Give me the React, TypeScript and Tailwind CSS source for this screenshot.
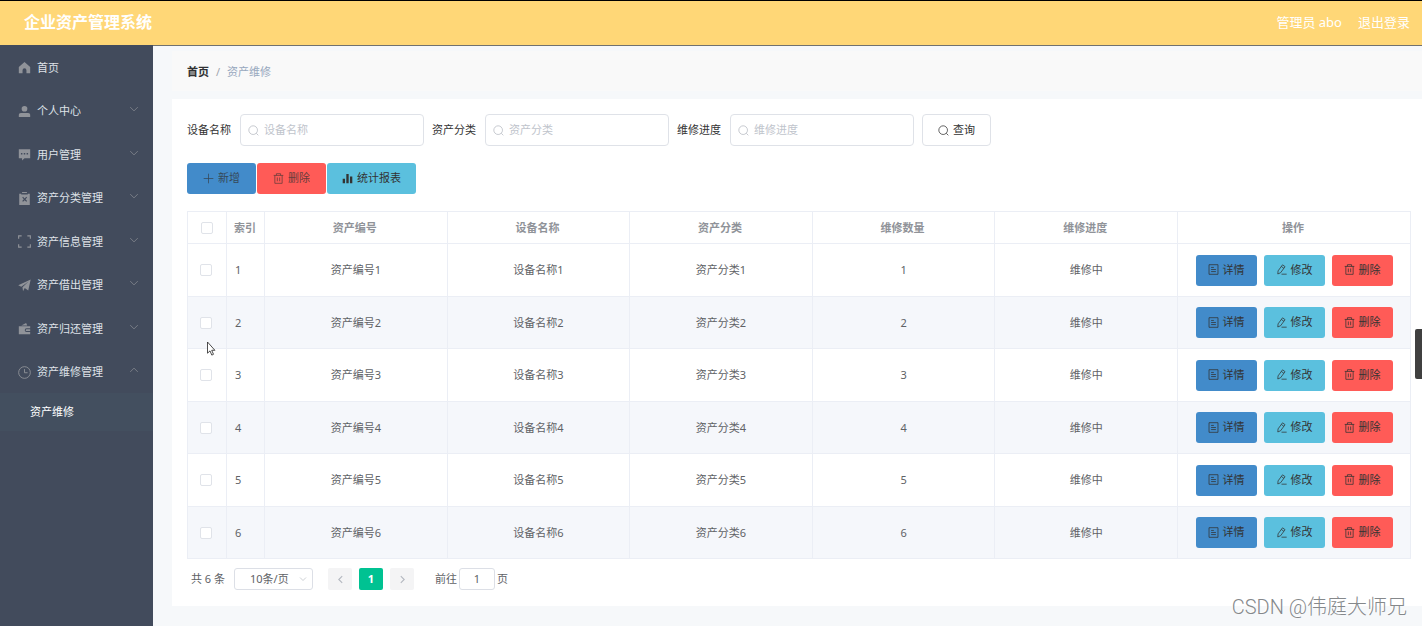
import type { ReactNode } from "react"
import clsx from "clsx"

type IconProps = { className?: string }

const Solid = ({ children, className }: { children: ReactNode; className?: string }) => (
  <svg viewBox="0 0 16 16" fill="currentColor" aria-hidden="true" className={clsx("shrink-0", className)}>
    {children}
  </svg>
)

const Line = ({ children, className }: { children: ReactNode; className?: string }) => (
  <svg
    viewBox="0 0 16 16"
    fill="none"
    stroke="currentColor"
    strokeWidth="1.1"
    aria-hidden="true"
    className={clsx("shrink-0", className)}
  >
    {children}
  </svg>
)

const HomeIcon = (p: IconProps) => (
  <Solid {...p}>
    <path d="M8 1.2 15 7.4V15h-4.6v-3.6a2.4 2.4 0 0 0-4.8 0V15H1V7.4z" />
  </Solid>
)
const UserIcon = (p: IconProps) => (
  <Solid {...p}>
    <circle cx="8" cy="4.6" r="3.5" />
    <path d="M1 14.8v-2.6c0-1.5 1-2.4 2.5-2.4h9c1.5 0 2.5.9 2.5 2.4v2.6z" />
  </Solid>
)
const CommentIcon = (p: IconProps) => (
  <Solid {...p}>
    <path
      fillRule="evenodd"
      d="M1 1.5h14v11H8l-3 2.800v-2.800H1zM3.600 6.300v1.600h1.800V6.300zm3.500 0v1.600h1.800V6.300zm3.500 0v1.600h1.800V6.300z"
    />
  </Solid>
)
const ReleaseIcon = (p: IconProps) => (
  <Solid {...p}>
    <path d="M5 0h6v1.300H5z" />
    <path
      fillRule="evenodd"
      d="M1.500 2H4v1.200h8V2h2.500v14h-13zM5.200 6.900 7.200 9l-2 2.100 1 1L8.200 10l2 2.100 1-1L9.200 9l2-2.100-1-1L8.200 8l-2-2.100z"
    />
  </Solid>
)
const FullScreenIcon = (p: IconProps) => (
  <Line {...p}>
    <path strokeWidth="1.4" d="M.8 4.500V1h3.700M11.500 1h3.700v3.500M15.200 11.500V15h-3.700M4.500 15H.8v-3.500" />
  </Line>
)
const PromotionIcon = (p: IconProps) => (
  <Solid {...p}>
    <path d="M15.600.6 12.600 14 8.300 11.200 6.200 15.200 5.500 10.200 13 3.200 4 9.400.3 7.600z" />
  </Solid>
)
const WalletIcon = (p: IconProps) => (
  <Solid {...p}>
    <path d="m4 4.200 6-3 1.400 3z" />
    <path fillRule="evenodd" d="M1 5.200h14v2.600h-4.500a2 2 0 0 0 0 4.400H15V15H1zm9.700 3.600H15v2.400h-4.300a1.200 1.200 0 0 1 0-2.400z" />
  </Solid>
)
const TimeIcon = (p: IconProps) => (
  <Line {...p}>
    <circle cx="8" cy="8" r="7.200" />
    <path d="M8 3.800V8.300h3.800" />
  </Line>
)
const ChevronIcon = (p: IconProps) => (
  <Line {...p}>
    <path d="m2 5 6 6 6-6" />
  </Line>
)
const SearchIcon = (p: IconProps) => (
  <Line {...p}>
    <circle cx="7.500" cy="7.500" r="6.300" />
    <path d="m12 12 3 3" />
  </Line>
)
const PlusIcon = (p: IconProps) => (
  <Line {...p}>
    <path d="M8 1v14M1 8h14" />
  </Line>
)
const TrashIcon = (p: IconProps) => (
  <Line {...p}>
    <path d="M1 3.500h14M5 3.500V1h6v2.500M2.700 3.500V15h10.600V3.500M6.300 6.500v5.500M9.700 6.500v5.500" />
  </Line>
)
const StatsIcon = (p: IconProps) => (
  <Solid {...p}>
    <path d="M1 8.500h3.400V15H1zM6.300 1.500h3.400V15H6.300zM11.600 5h3.400v10h-3.400z" />
  </Solid>
)
const TicketsIcon = (p: IconProps) => (
  <Line {...p}>
    <path d="M1.500 1h13v14h-13zM4.500 5h4M4.500 8h7M4.500 11h7" />
  </Line>
)
const EditIcon = (p: IconProps) => (
  <Line {...p}>
    <path d="m3 10 6.500-8.800 3.700 2.700L6.700 12.700 2.600 14.500zM7.800 3.600l3.700 2.700M8 14.800h7.500" />
  </Line>
)

const menu = [
  { label: "首页", icon: HomeIcon },
  { label: "个人中心", icon: UserIcon, children: true },
  { label: "用户管理", icon: CommentIcon, children: true },
  { label: "资产分类管理", icon: ReleaseIcon, children: true },
  { label: "资产信息管理", icon: FullScreenIcon, children: true },
  { label: "资产借出管理", icon: PromotionIcon, children: true },
  { label: "资产归还管理", icon: WalletIcon, children: true },
  { label: "资产维修管理", icon: TimeIcon, children: true, open: true },
]

const filters = [
  { id: "name", label: "设备名称" },
  { id: "category", label: "资产分类" },
  { id: "progress", label: "维修进度" },
]

const columns = ["资产编号", "设备名称", "资产分类", "维修数量", "维修进度"]

const rows = [1, 2, 3, 4, 5, 6].map((n) => ({
  id: n,
  cells: [`资产编号${n}`, `设备名称${n}`, `资产分类${n}`, `${n}`, "维修中"],
}))

const cell = "border-r border-b border-[#ebeef5]"

function Checkbox({ label }: { label: string }) {
  return (
    <input
      type="checkbox"
      aria-label={label}
      className="block size-3 mx-auto appearance-none rounded-xs border border-[#e0e3e9] bg-white checked:bg-[#00c292]"
    />
  )
}

function Header() {
  return (
    <header className="h-[45px] pl-6 pr-3 pb-[3px] flex items-center justify-between border-t border-black bg-[#ffd777] text-white">
      <h1 className="text-base font-bold">企业资产管理系统</h1>
      <div className="flex items-center gap-4 text-[13px]">
        <span>管理员 abo</span>
        <a href="#logout">退出登录</a>
      </div>
    </header>
  )
}

function Sidebar() {
  return (
    <nav className="w-[153px] shrink-0 bg-[#424b5c] text-[#dfe2e8]">
      <ul className="grid auto-rows-fr h-[348px]">
        {menu.map(({ label, icon: Icon, children, open }) => (
          <li key={label}>
            <a href="#menu" className="h-full pt-0.5 pl-[18px] pr-3 flex items-center">
              <Icon className="size-[13px] mr-1.5 text-[#909399]" />
              <span className="flex-1">{label}</span>
              {children && (
                <ChevronIcon className={clsx("size-2.5 mb-1 mr-0.5 text-[#909399]", open && "rotate-180")} />
              )}
            </a>
          </li>
        ))}
      </ul>
      <a href="#repair" className="h-[38px] pl-[30px] flex items-center bg-[#434f5f] text-white">
        资产维修
      </a>
    </nav>
  )
}

function SearchForm() {
  return (
    <form className="flex flex-wrap items-center gap-2" onSubmit={(e) => e.preventDefault()}>
      {filters.map(({ id, label }) => (
        <div key={id} className="flex items-center gap-[9px]">
          <label htmlFor={id} className="text-[#333]">
            {label}
          </label>
          <div className="relative">
            <SearchIcon className="absolute left-2 top-[11px] size-[11px] text-[#b4b8c0]" />
            <input
              id={id}
              placeholder={label}
              className="w-[184px] h-8 pl-[23px] pr-2 pb-0.5 rounded border border-[#dfe2e8] bg-white placeholder:text-[#c0c4cc] outline-none"
            />
          </div>
        </div>
      ))}
      <button className="w-[69px] h-8 flex items-center justify-center gap-1 rounded border border-[#dfe2e8] text-[#333]">
        <SearchIcon className="size-[11px]" />
        查询
      </button>
    </form>
  )
}

function Toolbar() {
  return (
    <div className="mt-[17px] flex gap-px text-[#333]">
      <button className="h-[31px] px-4 pb-px flex items-center gap-1 rounded-[3px] bg-[#428bca]">
        <PlusIcon className="size-[11px] opacity-75" />
        <span className="opacity-75">新增</span>
      </button>
      <button className="h-[31px] px-4 pb-px flex items-center gap-1 rounded-[3px] bg-[#ff5b57]">
        <TrashIcon className="size-[11px] opacity-75" />
        <span className="opacity-75">删除</span>
      </button>
      <button className="h-[31px] px-[15px] pb-px flex items-center gap-1 rounded-[3px] bg-[#5bc0de]">
        <StatsIcon className="size-[11px]" />
        统计报表
      </button>
    </div>
  )
}

function RowActions() {
  const button = "h-[31px] px-3 pb-px flex items-center gap-1 rounded-[3px]"
  return (
    <div className="flex justify-center gap-[7px] text-[#333]">
      <button className={clsx(button, "bg-[#428bca]")}>
        <TicketsIcon className="size-[11px]" />
        详情
      </button>
      <button className={clsx(button, "bg-[#5bc0de]")}>
        <EditIcon className="size-[11px]" />
        修改
      </button>
      <button className={clsx(button, "bg-[#ff5b57]")}>
        <TrashIcon className="size-[11px]" />
        删除
      </button>
    </div>
  )
}

function RepairTable() {
  return (
    <table className="mt-[17px] w-full table-fixed border-separate border-spacing-0 border-t border-l border-[#ebeef5] text-center">
      <colgroup>
        <col className="w-[39px]" />
        <col className="w-[38px]" />
        {columns.map((name) => (
          <col key={name} />
        ))}
        <col className="w-[233px]" />
      </colgroup>
      <thead className="text-[#909399]">
        <tr className="h-8">
          <th className={cell}>
            <Checkbox label="全选" />
          </th>
          <th className={clsx(cell, "pl-[7px] text-left font-bold")}>索引</th>
          {columns.map((name) => (
            <th key={name} className={clsx(cell, "pr-0.5 font-bold")}>
              {name}
            </th>
          ))}
          <th className={clsx(cell, "pr-0.5 font-bold")}>操作</th>
        </tr>
      </thead>
      <tbody className="text-[#606266]">
        {rows.map((row) => (
          <tr key={row.id} className="h-[53px] even:h-[52px] even:bg-[#f5f7fb]">
            <td className={clsx(cell, "pr-0.5")}>
              <Checkbox label={`选择 ${row.id}`} />
            </td>
            <td className={clsx(cell, "pl-2 text-left")}>{row.id}</td>
            {row.cells.map((value, i) => (
              <td key={columns[i]} className={cell}>
                {value}
              </td>
            ))}
            <td className={cell}>
              <RowActions />
            </td>
          </tr>
        ))}
      </tbody>
    </table>
  )
}

function Pagination() {
  return (
    <div className="mt-[9px] pl-1 flex items-center text-[#606266]">
      <span className="mr-[9px]">共 6 条</span>
      <div className="relative mr-[15px]">
        <select
          aria-label="每页条数"
          className="block w-[79px] h-[22px] pl-[15px] appearance-none rounded-[3px] border border-[#dcdfe6] bg-white"
        >
          <option>10条/页</option>
        </select>
        <ChevronIcon className="absolute right-1.5 top-[7px] size-2 text-[#a4a8b0] pointer-events-none" />
      </div>
      <div className="flex gap-[7px]">
        <button aria-label="上一页" className="w-6 h-[22px] flex items-center justify-center rounded-xs bg-[#f4f4f5] text-[#b4b8c0]">
          <ChevronIcon className="size-[9px] rotate-90 stroke-2" />
        </button>
        <button className="w-6 h-[22px] rounded-xs bg-[#00c292] text-white font-bold">1</button>
        <button aria-label="下一页" className="w-6 h-[22px] flex items-center justify-center rounded-xs bg-[#f4f4f5] text-[#b4b8c0]">
          <ChevronIcon className="size-[9px] -rotate-90 stroke-2" />
        </button>
      </div>
      <label className="ml-[21px] flex items-center gap-0.5">
        前往
        <input
          defaultValue="1"
          className="w-9 h-[22px] pb-0.5 rounded-[3px] border border-[#dcdfe6] bg-white text-center outline-none"
        />
        页
      </label>
    </div>
  )
}

export default function App() {
  return (
    <div className="relative min-h-screen flex flex-col overflow-hidden bg-[#f6f8fa] text-[11px] leading-4 font-['Noto_Sans','Noto_Sans_CJK_SC',sans-serif]">
      <Header />
      <div className="flex-1 flex">
        <Sidebar />
        <main className="flex-1 min-w-0 pl-[19px] pb-5 border-t border-[#70716f]">
          <div className="mt-[5px] h-10 pt-0.5 px-[15px] flex items-center gap-[7px] bg-[#f9f9f9]">
            <a href="#home" className="font-bold text-[#303133]">
              首页
            </a>
            <span className="text-[#a0a4ad]">/</span>
            <span className="text-[#97a8be]">资产维修</span>
          </div>
          <section className="mt-2 pt-[15px] pl-[15px] pr-[11px] pb-4 bg-white">
            <SearchForm />
            <Toolbar />
            <RepairTable />
            <Pagination />
          </section>
        </main>
      </div>

      <div className="absolute right-0 top-[329px] w-[7px] h-[50px] rounded-l-xs bg-[#404040]" />
      <svg viewBox="0 0 10 16" className="absolute left-[206px] top-[341px] w-2.5 h-4" aria-hidden="true">
        <path d="M1.500 1v11.200l2.500-2.300 1.800 4.200 1.700-.8-1.800-4h3.200z" fill="#fff" stroke="#222" strokeWidth=".8" />
      </svg>
      <p className="absolute right-[15px] bottom-[7px] text-xl leading-6 font-['Roboto','Noto_Sans_CJK_SC',sans-serif] font-light text-[#85888b] [text-shadow:-1px_-1px_0_#fff]">
        CSDN @伟庭大师兄
      </p>
    </div>
  )
}
